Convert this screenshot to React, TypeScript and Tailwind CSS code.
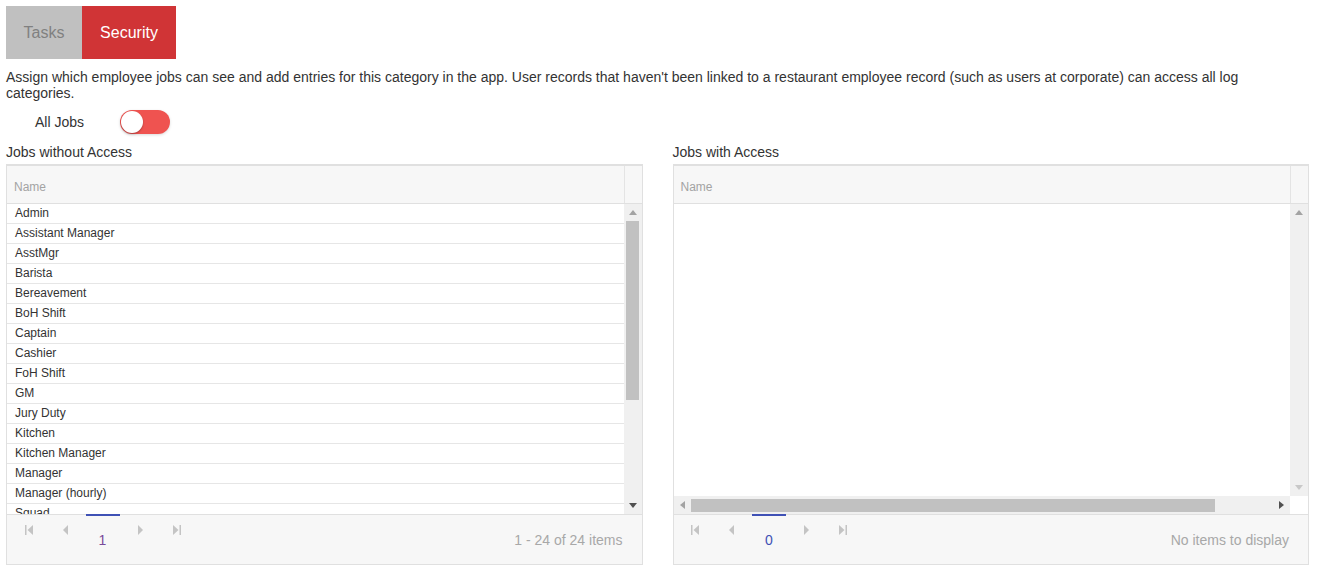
import React from "react";

const jobs = [
  "Admin",
  "Assistant Manager",
  "AsstMgr",
  "Barista",
  "Bereavement",
  "BoH Shift",
  "Captain",
  "Cashier",
  "FoH Shift",
  "GM",
  "Jury Duty",
  "Kitchen",
  "Kitchen Manager",
  "Manager",
  "Manager (hourly)",
  "Squad",
];

const Tri = ({ dir, color }: { dir: "up" | "down" | "left" | "right"; color: string }) => {
  const pts = {
    up: "0,5 4,0 8,5",
    down: "0,0 8,0 4,5",
    left: "5,0 5,8 0,4",
    right: "0,0 0,8 5,4",
  }[dir];
  const w = dir === "up" || dir === "down" ? 8 : 5;
  const h = dir === "up" || dir === "down" ? 5 : 8;
  return (
    <svg width={w} height={h} viewBox={`0 0 ${w} ${h}`}>
      <polygon points={pts} fill={color} />
    </svg>
  );
};

const PagerIcon = ({ kind }: { kind: "first" | "prev" | "next" | "last" }) => (
  <svg width="10" height="12" viewBox="0 0 10 12">
    {kind === "first" && (
      <>
        <rect x="1" y="1" width="1.5" height="10" fill="#c4c4c4" />
        <polygon points="9,1 9,11 3.5,6" fill="#c4c4c4" />
      </>
    )}
    {kind === "prev" && <polygon points="7,1 7,11 2,6" fill="#c4c4c4" />}
    {kind === "next" && <polygon points="3,1 3,11 8,6" fill="#c4c4c4" />}
    {kind === "last" && (
      <>
        <polygon points="1,1 1,11 6.5,6" fill="#c4c4c4" />
        <rect x="7.5" y="1" width="1.5" height="10" fill="#c4c4c4" />
      </>
    )}
  </svg>
);

const Pager = ({ page, pageColor, info, pl }: { page: string; pageColor: string; info: string; pl: string }) => (
  <div className="h-[50px] border-t border-[#e0e0e0] bg-[#f7f7f7] flex items-start justify-between pr-[19px]">
    <div className={`flex items-start ${pl}`}>
      <div className="w-[37px] pt-[9px] flex justify-center"><PagerIcon kind="first" /></div>
      <div className="w-[37px] pt-[9px] flex justify-center"><PagerIcon kind="prev" /></div>
      <div className="w-[37px] flex flex-col items-center">
        <div className="h-[2px] w-[34px] bg-[#3f51b5] -mt-px" />
        <span className={`mt-[16px] text-[14px] leading-[16px] ${pageColor}`}>{page}</span>
      </div>
      <div className="w-[37px] pt-[9px] flex justify-center"><PagerIcon kind="next" /></div>
      <div className="w-[37px] pt-[9px] flex justify-center"><PagerIcon kind="last" /></div>
    </div>
    <span className="mt-[17px] text-[14px] leading-[16px] text-[#a8a8a8]">{info}</span>
  </div>
);

const GridHeader = () => (
  <div className="flex h-[38px] bg-[#f7f7f7] border-b border-[#e0e0e0]">
    <div className="flex-1 flex items-center pl-[7px] pt-[5px] text-[12px] text-[#a3a3a3]">Name</div>
    <div className="w-[18px] border-l border-[#e4e4e4]" />
  </div>
);

export default function App() {
  return (
    <div className="min-h-[565px] bg-white pl-[6px] pr-[8px] pt-[6px] text-[#333] font-['Liberation_Sans',Arial,sans-serif]">
      <div className="flex h-[53px]">
        <div className="w-[76px] bg-[#c0c0c0] text-[#808080] text-[16px] flex items-center justify-center">Tasks</div>
        <div className="w-[94px] bg-[#d03436] text-white text-[16px] flex items-center justify-center">Security</div>
      </div>

      <p className="mt-[10px] text-[14px] leading-[16px] pr-[60px]">
        Assign which employee jobs can see and add entries for this category in the app. User records that haven't been linked to a restaurant employee record (such as users at corporate) can access all log categories.
      </p>

      <div className="flex items-center mt-[8px] h-[26px]">
        <span className="ml-[29px] text-[14px]">All Jobs</span>
        <div className="ml-[36px] w-[50px] h-[24px] rounded-full bg-[#ef5350] relative shadow-[0_1px_3px_rgba(0,0,0,0.15)]">
          <div className="absolute left-[1px] top-[1px] w-[22px] h-[22px] rounded-full bg-white shadow-[0_1px_2px_rgba(0,0,0,0.3)]" />
        </div>
      </div>

      <div className="grid grid-cols-2 gap-[30px] mt-[9px]">
        <div>
          <div className="text-[14px] leading-[16px] mb-[4px]">Jobs without Access</div>
          <div className="border border-[#e0e0e0] border-t-2">
            <GridHeader />
            <div className="flex h-[310px]">
              <div className="flex-1 overflow-hidden">
                {jobs.map((j) => (
                  <div key={j} className="h-[20px] border-b border-[#e6e6e6] pl-[8px] text-[12px] leading-[19px] text-[#333]">
                    {j}
                  </div>
                ))}
              </div>
              <div className="w-[18px] bg-[#f0f0f0] flex flex-col items-center">
                <div className="h-[17px] flex items-center justify-center"><Tri dir="up" color="#a3a3a3" /></div>
                <div className="w-[13px] h-[179px] bg-[#c1c1c1]" />
                <div className="flex-1" />
                <div className="h-[17px] flex items-center justify-center"><Tri dir="down" color="#505050" /></div>
              </div>
            </div>
            <Pager page="1" pageColor="text-[#7a4a9a]" info="1 - 24 of 24 items" pl="pl-[3px]" />
          </div>
        </div>

        <div>
          <div className="text-[14px] leading-[16px] mb-[4px]">Jobs with Access</div>
          <div className="border border-[#e0e0e0] border-t-2">
            <GridHeader />
            <div className="flex h-[310px]">
              <div className="flex-1 flex flex-col">
                <div className="flex-1 bg-white" />
                <div className="h-[18px] bg-[#f0f0f0] flex items-center">
                  <div className="w-[17px] flex justify-center"><Tri dir="left" color="#a3a3a3" /></div>
                  <div className="w-[524px] h-[13px] bg-[#c1c1c1]" />
                  <div className="flex-1" />
                  <div className="w-[17px] flex justify-center"><Tri dir="right" color="#505050" /></div>
                </div>
              </div>
              <div className="w-[18px] flex flex-col">
                <div className="flex-1 bg-[#f0f0f0] flex flex-col items-center">
                  <div className="h-[17px] flex items-center justify-center"><Tri dir="up" color="#a3a3a3" /></div>
                  <div className="flex-1" />
                  <div className="h-[17px] flex items-center justify-center"><Tri dir="down" color="#c8c8c8" /></div>
                </div>
                <div className="h-[18px] bg-white" />
              </div>
            </div>
            <Pager page="0" pageColor="text-[#3f51b5]" info="No items to display" pl="pl-[3px]" />
          </div>
        </div>
      </div>
    </div>
  );
}
